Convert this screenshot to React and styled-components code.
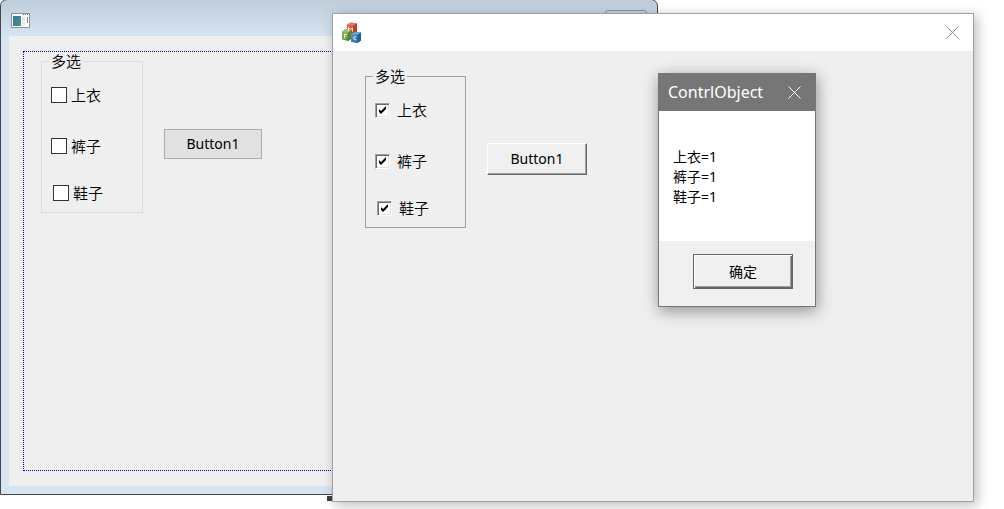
import React from "react";
import styled, { createGlobalStyle, css } from "styled-components";

const GlobalStyle = createGlobalStyle`
  *, *::before, *::after { box-sizing: border-box; }
  html, body, #root { height: 100%; }
  body {
    margin: 0;
    background: #ffffff;
    color: #000000;
    font-family: "Noto Sans", "Noto Sans CJK SC", sans-serif;
    font-size: 15px;
    line-height: 20px;
    overflow: hidden;
  }
`;

const Desktop = styled.main`
  position: relative;
  height: 100%;
  overflow: hidden;
`;

const DesignerWindow = styled.section`
  position: absolute;
  left: 0;
  top: -1px;
  width: 658px;
  display: flex;
  flex-direction: column;
  padding: 0 8px 8px;
  border: 1px solid #45474d;
  border-radius: 7px 7px 0 0;
  background: linear-gradient(#bfcddb, #d7e4f2 38px);
`;

const DesignerTitle = styled.header`
  display: flex;
  align-items: center;
  justify-content: space-between;
  height: 36px;
  padding: 4px 2px 0;
`;

const CaptionBox = styled.span`
  width: 42px;
  height: 20px;
  border: 1px solid #8795a5;
  border-radius: 3px;
  background: #c3d0de;
`;

const DesignerClient = styled.div`
  padding: 15px 14px;
  background: #efefef;
`;

const DottedFrame = styled.div`
  display: flex;
  align-items: flex-start;
  gap: 21px;
  height: 420px;
  padding: 0 17px;
  border: 1px dotted #0000a8;
`;

const RunWindow = styled.section`
  position: absolute;
  left: 332px;
  top: 13px;
  width: 642px;
  height: 489px;
  border: 1px solid #a0a0a0;
  background: #efefef;
  box-shadow: 3px 3px 12px rgba(0, 0, 0, 0.28);
`;

const RunTitle = styled.header`
  display: flex;
  align-items: center;
  justify-content: space-between;
  height: 37px;
  padding: 0 14px 0 9px;
  background: #ffffff;
`;

const RunClient = styled.div`
  display: flex;
  align-items: flex-start;
  gap: 21px;
  padding: 15px 32px;
`;

const Group = styled.fieldset`
  display: flex;
  flex-direction: column;
  width: ${(p) => (p.$classic ? 101 : 102)}px;
  min-width: 0;
  height: ${(p) => (p.$classic ? 162 : 161)}px;
  margin: 0;
  padding: ${(p) => (p.$classic ? 14 : 15)}px 9px 0;
  border: 1px solid ${(p) => (p.$classic ? "#a0a0a0" : "#dcdcdc")};
  font-weight: 350;
`;

const Legend = styled.legend`
  height: ${(p) => (p.$classic ? 20 : 18)}px;
  margin-left: -2px;
  padding: 0 2px;
  line-height: ${(p) => (p.$classic ? 20 : 18)}px;
`;

const Option = styled.label`
  display: flex;
  align-items: center;
  gap: ${(p) => (p.$classic ? 7 : 4)}px;
  height: 20px;
  margin-bottom: ${(p) => p.$space || 0}px;
  padding-left: ${(p) => (p.$indent ? 2 : 0)}px;
  white-space: nowrap;
`;

const Tick = styled.input`
  appearance: none;
  flex: none;
  width: 16px;
  height: 16px;
  margin: 0;
  border: 1px solid #333333;
  background: #ffffff;
  ${(p) =>
    p.$classic &&
    css`
      width: 15px;
      height: 15px;
      border-color: #a0a0a0 #ffffff #ffffff #a0a0a0;
      box-shadow: inset 1px 1px 0 #696969, inset -1px -1px 0 #e3e3e3;
      &:checked {
        background: #ffffff
          url("data:image/svg+xml,%3Csvg xmlns='http://www.w3.org/2000/svg' viewBox='0 0 13 13'%3E%3Cpath d='M3 5v3l2 2 5-5V2L5 7z'/%3E%3C/svg%3E")
          center / 13px 13px no-repeat;
      }
    `}
`;

const PushButton = styled.button`
  width: 98px;
  height: 30px;
  padding: 0;
  margin-top: 77px;
  border: 1px solid #adadad;
  background: #e1e1e1;
  color: #000000;
  font: inherit;
  font-size: 14px;
  ${(p) =>
    p.$classic &&
    css`
      width: 100px;
      height: 32px;
      border-color: #ffffff #696969 #696969 #ffffff;
      background: #f0f0f0;
      box-shadow: inset -1px -1px 0 #a0a0a0;
    `}
`;

const MessageBox = styled.section`
  position: absolute;
  left: 658px;
  top: 73px;
  width: 158px;
  border: 1px solid #767676;
  background: #f0f0f0;
  box-shadow: 1px 4px 15px rgba(0, 0, 0, 0.4);
`;

const MessageTitle = styled.header`
  display: flex;
  align-items: center;
  justify-content: space-between;
  height: 37px;
  padding: 0 14px 1px 9px;
  background: #767676;
  color: #ffffff;
`;

const MessageHeading = styled.h1`
  margin: 0;
  font-size: 16px;
  font-weight: 400;
`;

const CloseButton = styled.button`
  display: flex;
  padding: 0;
  border: 0;
  background: transparent;
  color: ${(p) => (p.$light ? "#ffffff" : "#8c8c8c")};
`;

const MessageText = styled.div`
  height: 130px;
  padding: 36px 14px 0;
  background: #ffffff;
  font-size: 14px;
`;

const MessageLine = styled.p`
  margin: 0;
`;

const MessageFooter = styled.footer`
  display: flex;
  justify-content: flex-end;
  padding: 13px 22px 17px;
`;

const OkButton = styled.button`
  width: 100px;
  height: 35px;
  padding: 0;
  border: 1px solid #646464;
  background: #f0f0f0;
  box-shadow: inset 1px 1px 0 #ffffff, inset -1px -1px 0 #696969, inset -2px -2px 0 #a0a0a0;
  color: #000000;
  font: inherit;
  font-size: 14px;
`;

const ResizeHandle = styled.span`
  position: absolute;
  left: 327px;
  top: 496px;
  width: 6px;
  height: 5px;
  background: #3f3f3f;
`;

function DialogIcon() {
  return (
    <svg width="19" height="15" viewBox="0 0 19 15" aria-hidden="true">
      <defs>
        <linearGradient id="pane" x1="0" y1="0" x2="1" y2="1">
          <stop offset="0" stopColor="#41709a" />
          <stop offset="1" stopColor="#3f9c7c" />
        </linearGradient>
      </defs>
      <path d="M.5.5h18v14H.5z" fill="#fff" stroke="#8b9498" />
      <path d="M2 3h8v10H2z" fill="url(#pane)" />
      <path d="M11 4h3v4h-3zM11 9h3v3h-3z" fill="#dfe4e6" />
      <path d="M16.5 4v6" stroke="#7b868b" />
      <path d="M12 1.5h5" stroke="#59666c" strokeDasharray="1 1" />
    </svg>
  );
}

function MfcIcon() {
  return (
    <svg width="20" height="21" viewBox="0 0 20 21" aria-hidden="true">
      <defs>
        <linearGradient id="red" x1="0" y1="0" x2="1" y2="1">
          <stop offset="0" stopColor="#e9745a" />
          <stop offset="1" stopColor="#b8301f" />
        </linearGradient>
        <linearGradient id="green" x1="0" y1="0" x2="1" y2="1">
          <stop offset="0" stopColor="#93c566" />
          <stop offset="1" stopColor="#3f8128" />
        </linearGradient>
        <linearGradient id="blue" x1="0" y1="0" x2="1" y2="1">
          <stop offset="0" stopColor="#5b9fd6" />
          <stop offset="1" stopColor="#1d5590" />
        </linearGradient>
      </defs>
      <path d="M5 2.500 9 .5l6 1v9l-3.500 2-6.500-1z" fill="url(#red)" />
      <path d="m5 2.500 4-2 6 1-3.500 2z" fill="#e57d66" />
      <path d="m11.500 3.500 3.500-2v9l-3.500 2z" fill="#c23b2a" />
      <path d="m0 9.500 4-2.500 5 1.500v8.500L6 19l-6-1.500z" fill="url(#green)" />
      <path d="m0 9.500 4-2.500 5 1.500-3 2.500z" fill="#97c372" />
      <path d="m6 11 3-2.500v8.500L6 19z" fill="#4a8c31" />
      <path d="m9 12 4-2 6 .5v8L15.500 21 9 20z" fill="url(#blue)" />
      <path d="m9 12 4-2 6 .5-3.500 2.500z" fill="#6ba6d7" />
      <path d="m15.500 13 3.500-2.500v8L15.500 21z" fill="#245f9b" />
      <path d="M6.500 9V5.500l2 2 2-1.500v3.500M2.500 16.500V12l2.500.5M2.500 14.300l2 .3M14.500 15q-3-1-3 1t3 2" fill="none" stroke="#fff" strokeOpacity=".9" />
    </svg>
  );
}

function CloseIcon({ size }) {
  return (
    <svg width={size} height={size} viewBox="0 0 13 13" fill="none" stroke="currentColor" aria-hidden="true">
      <path d="m.5.5 12 12m0-12-12 12" />
    </svg>
  );
}

const items = [
  { name: "上衣", space: 31 },
  { name: "裤子", space: 27 },
  { name: "鞋子", indent: true },
];

function ClothesGroup({ classic }) {
  return (
    <Group $classic={classic}>
      <Legend $classic={classic}>多选</Legend>
      {items.map((item) => (
        <Option key={item.name} $classic={classic} $space={item.space} $indent={item.indent}>
          <Tick type="checkbox" defaultChecked={classic} $classic={classic} />
          {item.name}
        </Option>
      ))}
    </Group>
  );
}

export default function App() {
  return (
    <Desktop>
      <GlobalStyle />
      <DesignerWindow>
        <DesignerTitle>
          <DialogIcon />
          <CaptionBox />
        </DesignerTitle>
        <DesignerClient>
          <DottedFrame>
            <ClothesGroup classic={false} />
            <PushButton type="button">Button1</PushButton>
          </DottedFrame>
        </DesignerClient>
      </DesignerWindow>
      <ResizeHandle />
      <RunWindow>
        <RunTitle>
          <MfcIcon />
          <CloseButton type="button" aria-label="Close">
            <CloseIcon size={13} />
          </CloseButton>
        </RunTitle>
        <RunClient>
          <ClothesGroup classic />
          <PushButton type="button" $classic>Button1</PushButton>
        </RunClient>
      </RunWindow>
      <MessageBox role="dialog" aria-labelledby="message-title">
        <MessageTitle>
          <MessageHeading id="message-title">ContrlObject</MessageHeading>
          <CloseButton type="button" aria-label="Close" $light>
            <CloseIcon size={13} />
          </CloseButton>
        </MessageTitle>
        <MessageText>
          {items.map((item) => (
            <MessageLine key={item.name}>{item.name}=1</MessageLine>
          ))}
        </MessageText>
        <MessageFooter>
          <OkButton type="button">确定</OkButton>
        </MessageFooter>
      </MessageBox>
    </Desktop>
  );
}
